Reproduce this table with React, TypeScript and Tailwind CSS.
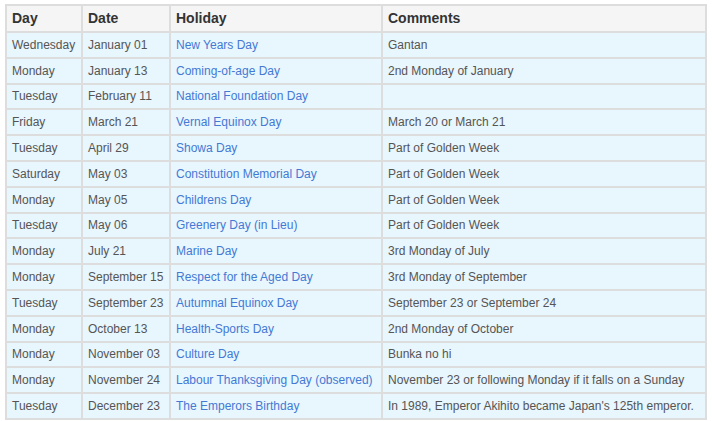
import React from "react";

const rows: [string, string, string, string][] = [
  ["Wednesday", "January 01", "New Years Day", "Gantan"],
  ["Monday", "January 13", "Coming-of-age Day", "2nd Monday of January"],
  ["Tuesday", "February 11", "National Foundation Day", ""],
  ["Friday", "March 21", "Vernal Equinox Day", "March 20 or March 21"],
  ["Tuesday", "April 29", "Showa Day", "Part of Golden Week"],
  ["Saturday", "May 03", "Constitution Memorial Day", "Part of Golden Week"],
  ["Monday", "May 05", "Childrens Day", "Part of Golden Week"],
  ["Tuesday", "May 06", "Greenery Day (in Lieu)", "Part of Golden Week"],
  ["Monday", "July 21", "Marine Day", "3rd Monday of July"],
  ["Monday", "September 15", "Respect for the Aged Day", "3rd Monday of September"],
  ["Tuesday", "September 23", "Autumnal Equinox Day", "September 23 or September 24"],
  ["Monday", "October 13", "Health-Sports Day", "2nd Monday of October"],
  ["Monday", "November 03", "Culture Day", "Bunka no hi"],
  ["Monday", "November 24", "Labour Thanksgiving Day (observed)", "November 23 or following Monday if it falls on a Sunday"],
  ["Tuesday", "December 23", "The Emperors Birthday", "In 1989, Emperor Akihito became Japan's 125th emperor."],
];

const headers = ["Day", "Date", "Holiday", "Comments"];

export default function App() {
  return (
    <div className="w-[712px] h-[421px] bg-white pl-[5px] pt-[4px]" style={{ fontFamily: '"Liberation Sans", Arial, sans-serif' }}>
      <div className="w-[702px] border-l-2 border-t-2 border-[#dddddd] grid grid-cols-[76px_88px_212px_324px]">
        {headers.map((h) => (
          <div
            key={h}
            className="h-[27px] border-r-2 border-b-2 border-[#dddddd] bg-[#f5f5f5] flex items-center pl-[5px] text-[14px] font-bold text-[#333333] whitespace-nowrap"
          >
            {h}
          </div>
        ))}
        {rows.map((r, i) => (
          <React.Fragment key={i}>
            {r.map((c, j) => (
              <div
                key={j}
                className={`h-[25.8px] border-r-2 border-b-2 border-[#dddddd] bg-[#e8f6fe] flex items-center pl-[5px] text-[12px] whitespace-nowrap overflow-hidden ${
                  j === 2 ? "text-[#4479d4]" : "text-[#555555]"
                }`}
              >
                {c}
              </div>
            ))}
          </React.Fragment>
        ))}
      </div>
    </div>
  );
}
